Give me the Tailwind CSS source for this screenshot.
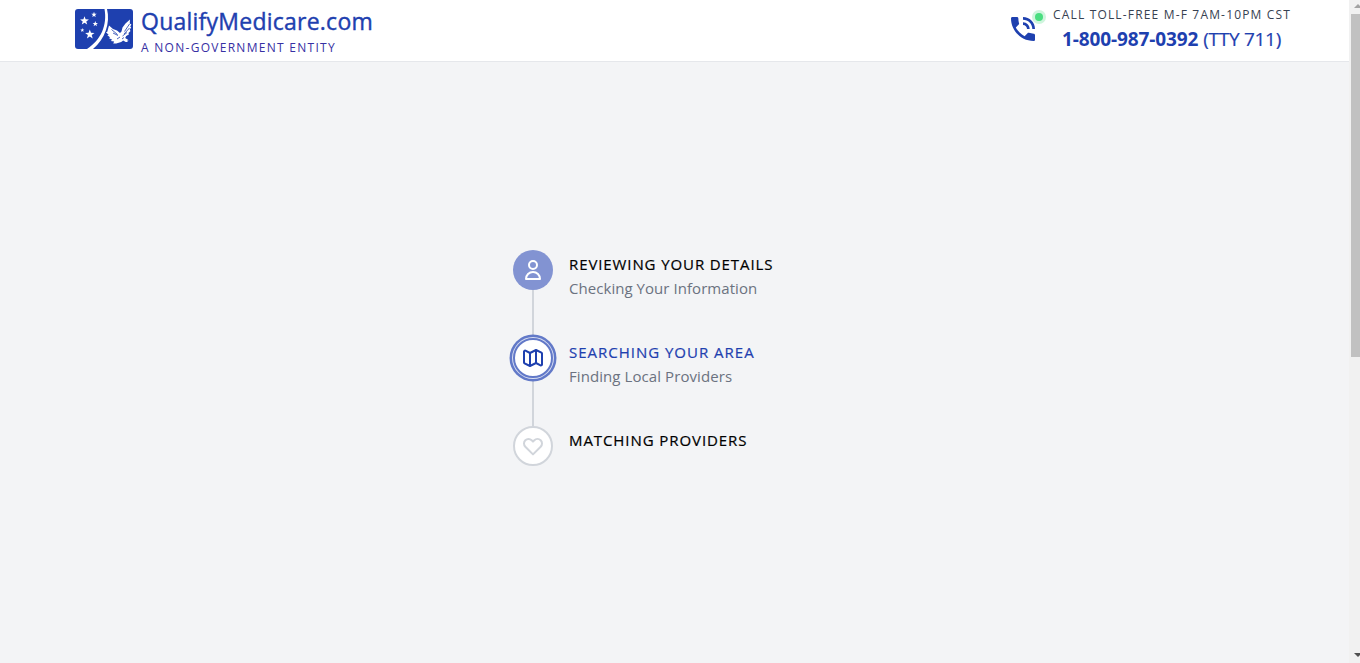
<!DOCTYPE html>
<html lang="en">
<head>
<meta charset="utf-8">
<title>QualifyMedicare.com</title>
<script src="https://cdn.jsdelivr.net/npm/@tailwindcss/browser@4"></script>
</head>
<body class="flex h-[663px] w-[1360px] overflow-hidden bg-[#f3f4f6] font-['Open_Sans','Noto_Sans',sans-serif]">
<div class="flex w-[1349px] flex-col">
  <header class="flex h-[62px] justify-between border-b border-[#e5e7eb] bg-white pl-[75px] pr-[58px] text-[#1e40af]">
    <div class="flex gap-2 pt-[9px]">
      <svg class="h-10 w-[58px]" viewBox="0 0 58 40">
        <rect width="58" height="40" rx="3" fill="#1e40af"/>
        <path d="M29.500 0H32C35.500 14 30 30 18 40H12C26 31 32.500 16 29.500 0Z" fill="#fff"/>
        <g fill="#fff">
          <path d="M9.500 7.200l1.100 3.100 3.300.1-2.600 2 .9 3.200-2.700-1.900-2.700 1.900.9-3.200-2.600-2 3.300-.1z"/>
          <path d="M19 2.800l.7 1.900 2 .1-1.600 1.200.6 2L19 6.900 17.300 8l.6-2-1.600-1.200 2-.1z"/>
          <path d="M20.300 12l.7 1.900 2 .1-1.600 1.200.6 2-1.700-1.100-1.700 1.100.6-2-1.600-1.200 2-.1z"/>
          <path d="M7.300 19l.5 1.400 1.500.1-1.200.9.4 1.500-1.200-.8-1.200.8.400-1.500-1.200-.9 1.500-.1z"/>
          <path d="M14.800 20.500l1.200 3.300 3.500.1-2.800 2.100 1 3.400-2.900-2-2.900 2 1-3.400-2.800-2.100 3.500-.1z"/>
        </g>
        <path d="M34 16.500 38 20l4 1.500 3 2.500 1.500-1.500 1-4 3-4 4.500-4-.3 4 1.700 1-1.200 2 1 1-1.500 2 .8 1.500-2 2 .4 1.500-2.700 1.500-1 2 3.500 2.200-1.500.4.500 1.500-2-.2-2.500-1.500-2 1.500-5 1.500-3 0 1-1.800-3.500-.5 1.500-1.300-3.500-1.700 1.500-.6-3-2.500 1.500-.1-2.800-3 1.300.1z" fill="#fff"/>
        <path d="M36.500 20.500l6 5M38 24l5 2.500M54.500 15l-5 7.500M54.500 19l-5.500 6M52 23.500l-4.500 3.500M45 28l-3 2M49 28.500l-2 1.500" stroke="#1e40af" stroke-width=".8" fill="none"/>
      </svg>
      <div class="whitespace-nowrap">
        <div class="-mt-[3px] h-[30px] w-fit text-[23px] font-medium leading-[30px] tracking-[0.24px] [-webkit-text-stroke:0.4px]">QualifyMedicare.com</div>
        <div class="mt-1 w-fit text-[12px] leading-4 tracking-[1.28px] text-[#3730a3]">A NON-GOVERNMENT ENTITY</div>
      </div>
    </div>
    <div class="flex">
      <div class="relative mt-[13px] h-8 w-[45px]">
        <svg class="size-8" viewBox="0 0 24 24" fill="#1e40af"><path d="M20 15.500c-1.200 0-2.500-.2-3.600-.6h-.3c-.3 0-.5.1-.7.300l-2.200 2.200c-2.800-1.500-5.200-3.800-6.600-6.600l2.200-2.200c.3-.3.400-.7.200-1-.3-1.100-.5-2.400-.5-3.600 0-.5-.5-1-1-1H4c-.5 0-1 .5-1 1 0 9.400 7.600 17 17 17 .5 0 1-.5 1-1v-3.500c0-.5-.5-1-1-1zM19 12h2c0-5-4-9-9-9v2c3.900 0 7 3.100 7 7zm-4 0h2c0-2.800-2.200-5-5-5v2c1.700 0 3 1.300 3 3z"/></svg>
        <span class="absolute -top-[3px] left-[25px] flex size-[14px] items-center justify-center rounded-full bg-[#cff5dd]"><span class="size-2 rounded-full bg-[#4ade80]"></span></span>
      </div>
      <div class="flex w-[239px] flex-col whitespace-nowrap pt-[7px]">
        <div class="ml-px w-fit text-[12px] leading-4 tracking-[1.17px] text-[#374151]">CALL TOLL-FREE M-F 7AM-10PM CST</div>
        <div class="ml-[10px] mt-[2px] flex gap-[5px] text-[19px] leading-7"><b class="font-bold tracking-[-0.12px]">1-800-987-0392</b><span class="tracking-[-0.27px] [-webkit-text-stroke:0.2px]">(TTY 711)</span></div>
      </div>
    </div>
  </header>
  <main class="flex flex-1 items-start pl-[513px] pt-[188px]">
    <ol class="flex flex-col whitespace-nowrap text-[15px] leading-6">
      <li class="flex h-[88px] gap-4">
        <div class="flex w-10 flex-col items-center">
          <div class="flex size-10 shrink-0 items-center justify-center rounded-full bg-[#8293d2]">
            <svg class="size-6" viewBox="0 0 24 24" fill="none" stroke="#fff" stroke-width="2" stroke-linecap="round" stroke-linejoin="round"><path d="M16 7a4 4 0 11-8 0 4 4 0 018 0zM12 14a7 7 0 00-7 7h14a7 7 0 00-7-7z"/></svg>
          </div>
          <div class="w-0.5 flex-1 bg-[#d1d5db]"></div>
        </div>
        <div class="pt-[2px]"><div class="w-fit font-medium tracking-[0.9px] text-black [-webkit-text-stroke:0.2px]">REVIEWING YOUR DETAILS</div><div class="w-fit tracking-[0.05px] text-[#6b7280]">Checking Your Information</div></div>
      </li>
      <li class="flex h-[88px] gap-4">
        <div class="flex w-10 flex-col items-center">
          <div class="relative z-10 flex size-10 shrink-0 items-center justify-center rounded-full border-2 border-[#6279c8] bg-white shadow-[0_0_0_1px_#d8def2,0_0_0_3.500px_#6279c8]">
            <svg class="size-6 shrink-0" viewBox="0 0 24 24" fill="none" stroke="#1e40af" stroke-width="2" stroke-linecap="round" stroke-linejoin="round"><path d="M9 20l-5.447-2.724A1 1 0 013 16.382V5.618a1 1 0 011.447-.894L9 7m0 13l6-3m-6 3V7m6 10l4.553 2.276A1 1 0 0021 18.382V7.618a1 1 0 00-.553-.894L15 4m0 13V4m0 0L9 7"/></svg>
          </div>
          <div class="w-0.5 flex-1 bg-[#d1d5db]"></div>
        </div>
        <div class="pt-[2px]"><div class="w-fit font-medium tracking-[0.99px] text-[#1e40af] [-webkit-text-stroke:0.2px]">SEARCHING YOUR AREA</div><div class="w-fit tracking-[0.08px] text-[#6b7280]">Finding Local Providers</div></div>
      </li>
      <li class="flex gap-4">
        <div class="flex size-10 items-center justify-center rounded-full border-2 border-[#d1d5db] bg-white">
          <svg class="size-6 shrink-0" viewBox="0 0 24 24" fill="none" stroke="#d1d5db" stroke-width="2" stroke-linecap="round" stroke-linejoin="round"><path d="M4.318 6.318a4.500 4.500 0 000 6.364L12 20.364l7.682-7.682a4.500 4.500 0 00-6.364-6.364L12 7.636l-1.318-1.318a4.500 4.500 0 00-6.364 0z"/></svg>
        </div>
        <div class="pt-[2px]"><div class="w-fit font-medium tracking-[0.92px] text-black [-webkit-text-stroke:0.2px]">MATCHING PROVIDERS</div></div>
      </li>
    </ol>
  </main>
</div>
<div class="flex w-[11px] flex-col justify-between overflow-hidden bg-[#f1f1f1] pl-0.5">
  <div>
    <svg class="block h-[14px] w-[9px]" viewBox="0 0 9 14" fill="#a3a3a3"><path d="M3 8 7 4 11 8z"/></svg>
    <div class="h-[343px] w-[9px] bg-[#c1c1c1]"></div>
  </div>
  <svg class="block h-[14px] w-[9px]" viewBox="0 0 9 14" fill="#505050"><path d="M3 4h8L7 8z"/></svg>
</div>
</body>
</html>
